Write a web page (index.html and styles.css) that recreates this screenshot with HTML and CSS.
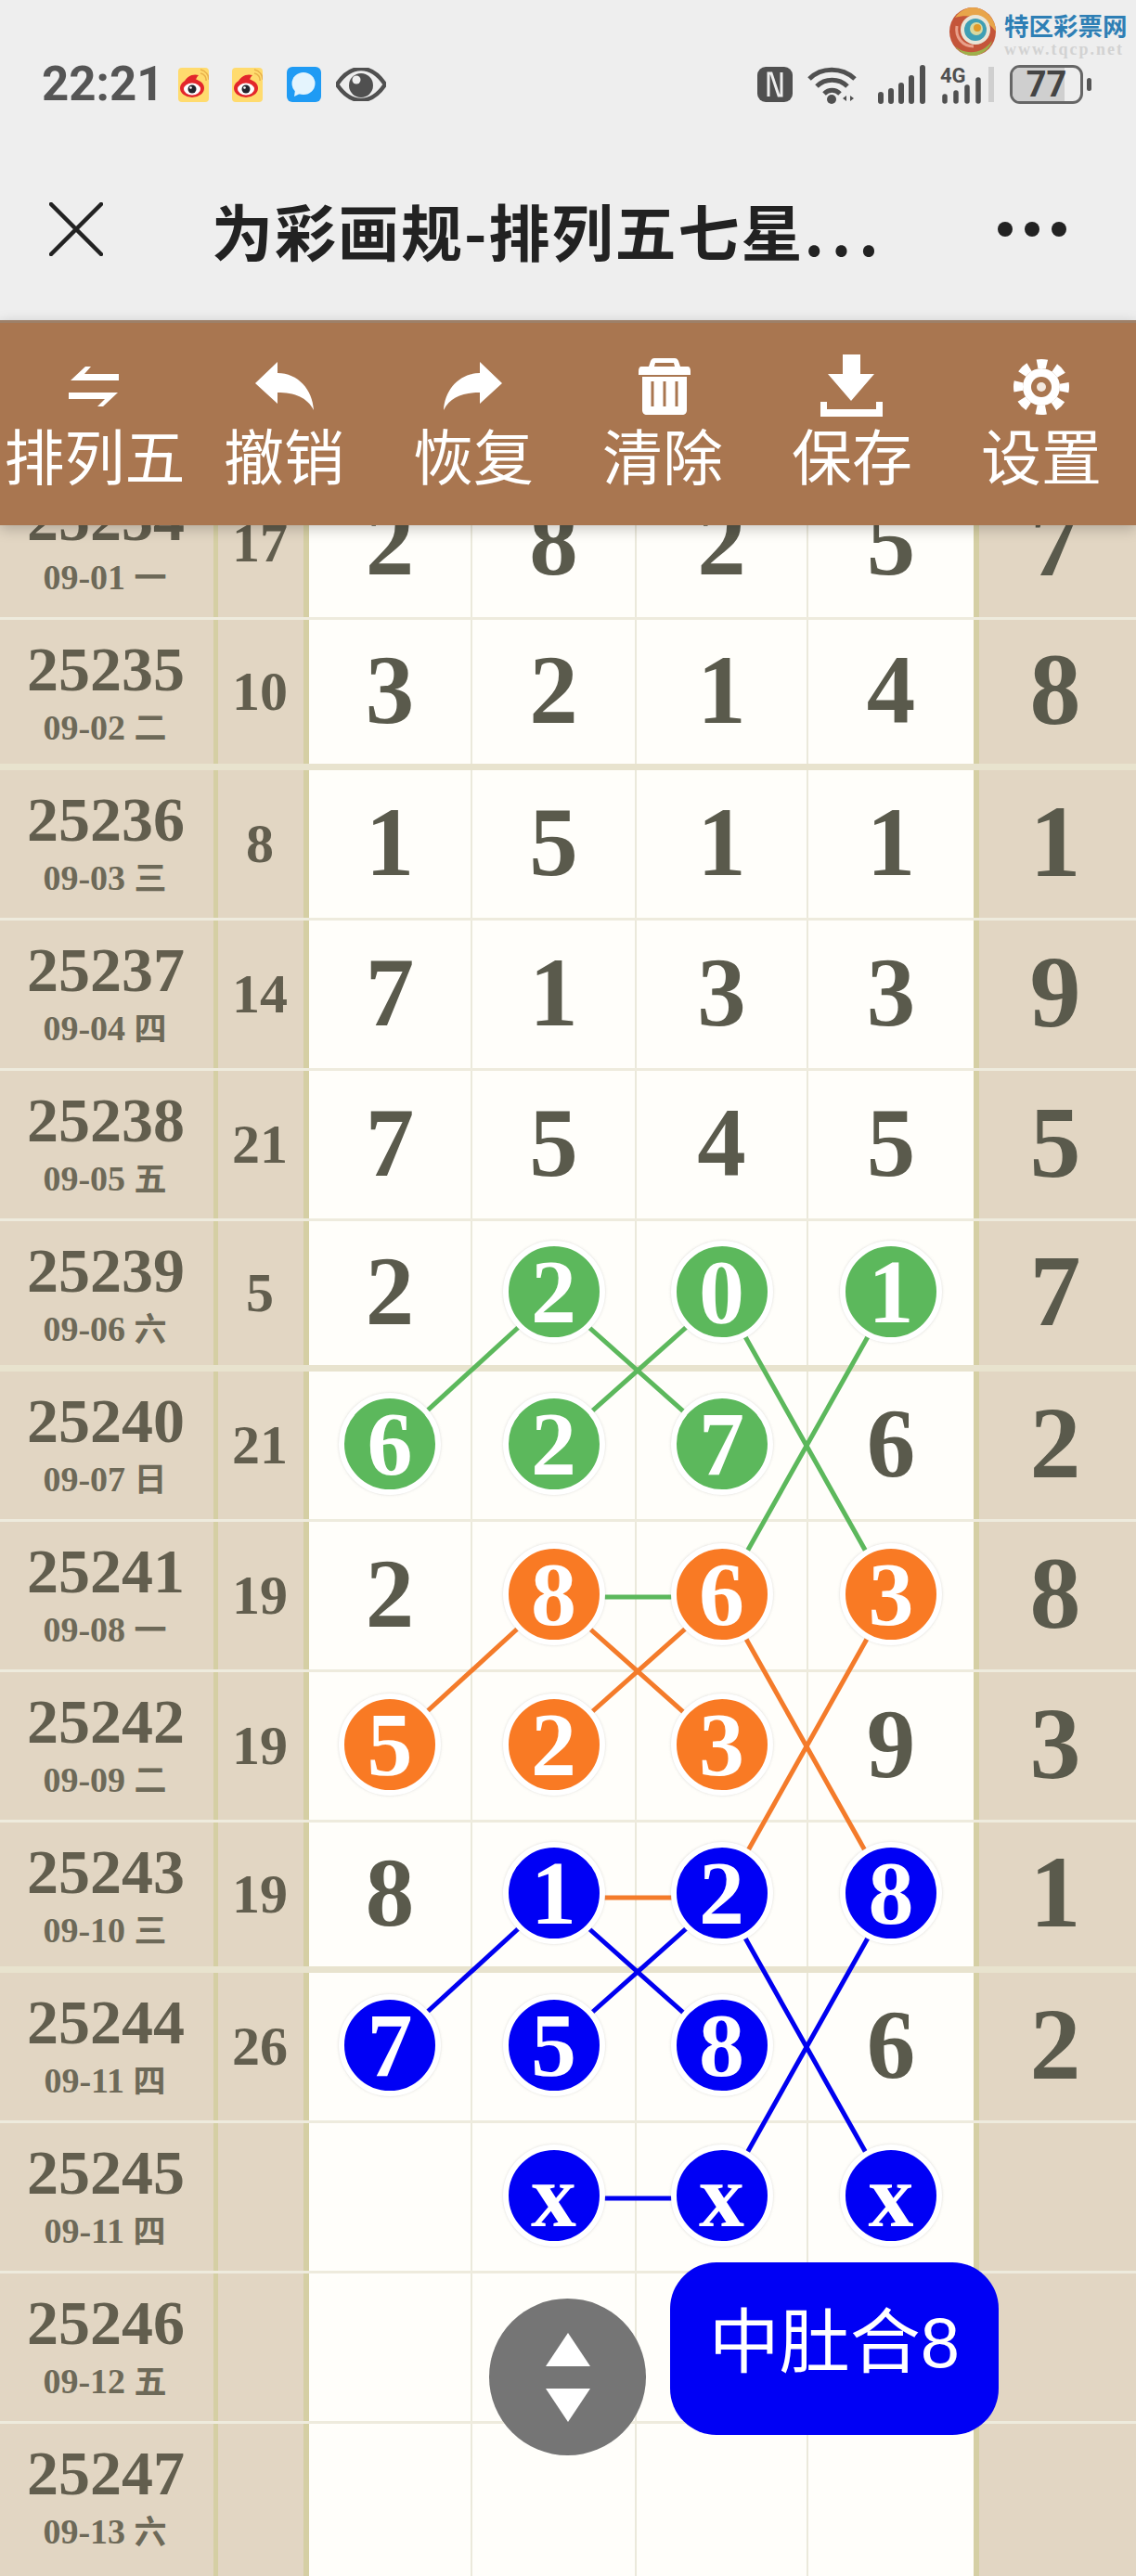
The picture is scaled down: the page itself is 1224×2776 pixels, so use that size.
FILE: index.html
```html
<!DOCTYPE html>
<html lang="zh-CN">
<head>
  <meta charset="UTF-8">
  <meta name="viewport" content="width=device-width, initial-scale=1.0">
  <title>为彩画规-排列五七星</title>
  <link rel="stylesheet" href="styles.css">
</head>
<body>
  <div class="phone">
    <div class="statusbar">
      <div class="status-left">
        <span class="clock">22:21</span>
        <svg class="note-weibo" viewBox="0 0 33 37">
          <rect width="33" height="37" rx="4" fill="#ffdb6e"/>
          <path d="M24 6a7 7 0 0 1 6 8M24 2a11 11 0 0 1 9 11" fill="none" stroke="#e8b04a" stroke-width="1.5"/>
          <ellipse cx="15" cy="22" rx="13" ry="10" fill="#e3262b"/>
          <path d="M6 16C9 9 16 6 22 8c-2 2-3 4-3 6z" fill="#e3262b"/>
          <ellipse cx="15" cy="23" rx="9" ry="6.5" fill="#fff"/>
          <circle cx="15" cy="23" r="4.5" fill="#23242c"/>
          <circle cx="13.5" cy="21.5" r="1.3" fill="#fff"/>
        </svg>
        <svg class="note-weibo" viewBox="0 0 33 37">
          <rect width="33" height="37" rx="4" fill="#ffdb6e"/>
          <path d="M24 6a7 7 0 0 1 6 8M24 2a11 11 0 0 1 9 11" fill="none" stroke="#e8b04a" stroke-width="1.5"/>
          <ellipse cx="15" cy="22" rx="13" ry="10" fill="#e3262b"/>
          <path d="M6 16C9 9 16 6 22 8c-2 2-3 4-3 6z" fill="#e3262b"/>
          <ellipse cx="15" cy="23" rx="9" ry="6.5" fill="#fff"/>
          <circle cx="15" cy="23" r="4.5" fill="#23242c"/>
          <circle cx="13.5" cy="21.5" r="1.3" fill="#fff"/>
        </svg>
        <svg class="note-msg" viewBox="0 0 37 38">
          <rect width="37" height="38" rx="6" fill="#1f9bf4"/>
          <ellipse cx="18" cy="18" rx="12.5" ry="12" fill="#e4f4fd"/>
          <path d="M9 25l-1 7 8-4z" fill="#e4f4fd"/>
        </svg>
        <svg class="note-eye" viewBox="0 0 54 36">
          <path d="M1 18C9 6 18 1 27 1s18 5 26 17c-8 12-17 17-26 17S9 30 1 18z" fill="none" stroke="#505050" stroke-width="4.5"/>
          <circle cx="27" cy="19" r="13" fill="#505050"/>
          <circle cx="22" cy="13" r="4.5" fill="#eee"/>
        </svg>
      </div>
      <div class="status-right">
        <svg class="sys-nfc" viewBox="0 0 38 38">
          <rect x="0" y="0" width="38" height="38" rx="9" fill="#505050"/>
          <path d="M12 32V7h3l8 24h3V6" fill="none" stroke="#eee" stroke-width="3"/>
        </svg>
        <svg class="sys-wifi" viewBox="0 0 53 42">
          <path d="M2 15C15 2 37 2 51 15M10 23c9-9 24-9 33 0M18 31c5-5 12-5 17 0" fill="none" stroke="#505050" stroke-width="5"/>
          <circle cx="26" cy="37" r="5" fill="#505050"/>
          <path d="M38 36l4-3v6zM46 33l4 3-4 3z" fill="#505050"/>
        </svg>
        <svg class="sys-signal" viewBox="0 0 51 42">
          <g stroke="#505050" stroke-width="6" stroke-linecap="round">
            <path d="M3 32v7M14 28v11M25 22v17M36 14v25M48 3v36"/>
          </g>
        </svg>
        <svg class="sys-signal4g" viewBox="0 0 60 42">
          <g stroke="#505050" stroke-width="5.5" stroke-linecap="round">
            <path d="M5 34v5M17 30v9M29 24v15M41 16v23"/>
          </g>
          <path d="M55 2v38" stroke="#cfcfcf" stroke-width="6"/>
          <text class="sys-4g-text" x="0" y="19">4G</text>
        </svg>
        <div class="battery">
          <div class="battery-body"><span class="battery-level"></span><span class="battery-num">77</span></div>
          <span class="battery-tip"></span>
        </div>
      </div>
    </div>

    <div class="logo">
      <svg class="logo-mark" viewBox="0 0 50 52">
        <ellipse cx="25" cy="26" rx="25" ry="26" fill="#c4553a"/>
        <path d="M25 0C38 0 50 12 50 26 40 12 22 6 6 11 11 4 18 0 25 0z" fill="#e8a54a"/>
        <path d="M6 42c12 10 30 8 40-6-2 9-12 16-21 16-8 0-14-4-19-10z" fill="#9eb04a"/>
        <path d="M8 20c-2 12 6 22 18 22" fill="none" stroke="#e9a08a" stroke-width="3"/>
        <circle cx="28" cy="24" r="16" fill="#e9e6d8"/>
        <circle cx="28" cy="24" r="12" fill="#3f9fb4"/>
        <circle cx="29" cy="23" r="7" fill="#d8d8a0"/>
        <circle cx="30" cy="22" r="4" fill="#e09a2a"/>
      </svg>
      <div class="logo-text">
        <div class="logo-name">特区彩票网</div>
        <div class="logo-url">www.tqcp.net</div>
      </div>
    </div>

    <div class="navbar">
      <svg class="nav-close" viewBox="0 0 58 58">
        <path d="M2 2l54 54M56 2L2 56" stroke="#222" stroke-width="4.5" stroke-linecap="round"/>
      </svg>
      <div class="nav-title">为彩画规-排列五七星<span class="nav-dots">...</span></div>
      <div class="nav-more"><span></span><span></span><span></span></div>
    </div>

    <div class="toolbar">
      <div class="tool">
        <svg viewBox="0 0 70 64"><path d="M9 26L25 11h6l-7 8h37v7zM7 39h53L44 54h-6l8-8H7z" fill="#fff"/></svg>
        <span>排列五</span>
      </div>
      <div class="tool">
        <svg viewBox="0 0 70 64"><path d="M4 29L28 6v12c22 0 38 18 39 40-7-14-21-19-39-19v12z" fill="#fff"/></svg>
        <span>撤销</span>
      </div>
      <div class="tool">
        <svg viewBox="0 0 70 64"><path d="M66 29L42 6v12C20 18 4 36 3 58c7-14 21-19 39-19v12z" fill="#fff"/></svg>
        <span>恢复</span>
      </div>
      <div class="tool">
        <svg viewBox="0 0 70 64">
          <path d="M20 11l2-6c1-2 2-3 4-3h22c2 0 3 1 4 3l2 6h8c2 0 3 2 3 5v4H9v-4c0-3 1-5 3-5zM26 11h22l-1-4H27z" fill="#fff" fill-rule="evenodd"/>
          <path d="M13 22h48v36c0 3-2 5-5 5H18c-3 0-5-2-5-5z" fill="#fff"/>
          <path d="M24 27v27M37 27v27M50 27v27" stroke="#a97650" stroke-width="3"/>
        </svg>
        <span>清除</span>
      </div>
      <div class="tool">
        <svg viewBox="0 0 70 64">
          <path d="M25-2h19v21h15L34 48 9 19h16zM1 49h7v8h53v-8h7v16H1z" fill="#fff"/>
        </svg>
        <span>保存</span>
      </div>
      <div class="tool">
        <svg viewBox="0 0 70 64">
          <circle cx="35" cy="33" r="20" fill="#fff"/>
          <circle cx="35" cy="33" r="25" fill="none" stroke="#fff" stroke-width="10" stroke-dasharray="10.6 9.03" stroke-dashoffset="5.3"/>
          <circle cx="35" cy="33" r="11" fill="#a97650"/>
          <circle cx="35" cy="33" r="5" fill="#f3e9df"/>
        </svg>
        <span>设置</span>
      </div>
    </div>

    <div class="board">
      <div class="rows">
        <svg class="links" viewBox="0 0 1224 2268">
          <g class="link-green">
            <line x1="596" y1="892" x2="419" y2="1054"/>
            <line x1="778" y1="892" x2="596" y2="1054"/>
            <line x1="596" y1="892" x2="778" y2="1054"/>
            <line x1="778" y1="892" x2="960" y2="1216"/>
            <line x1="960" y1="892" x2="778" y2="1216"/>
            <line x1="596" y1="1217" x2="778" y2="1217"/>
          </g>
          <g class="link-orange">
            <line x1="596" y1="1216" x2="419" y2="1378"/>
            <line x1="778" y1="1216" x2="596" y2="1378"/>
            <line x1="596" y1="1216" x2="778" y2="1378"/>
            <line x1="778" y1="1216" x2="960" y2="1540"/>
            <line x1="960" y1="1216" x2="778" y2="1540"/>
            <line x1="596" y1="1541" x2="778" y2="1541"/>
          </g>
          <g class="link-blue">
            <line x1="596" y1="1540" x2="419" y2="1702"/>
            <line x1="778" y1="1540" x2="596" y2="1702"/>
            <line x1="596" y1="1540" x2="778" y2="1702"/>
            <line x1="778" y1="1540" x2="960" y2="1864"/>
            <line x1="960" y1="1540" x2="778" y2="1864"/>
            <line x1="596" y1="1865" x2="778" y2="1865"/>
          </g>
        </svg>

        <div class="row">
          <div class="cell-issue"><div class="issue">25234</div><div class="date">09-01 <span class="week">一</span></div></div>
          <div class="cell-sum">17</div>
          <div class="num">2</div><div class="num">8</div><div class="num">2</div><div class="num">5</div>
          <div class="cell-last">7</div>
        </div>
        <div class="row row-end">
          <div class="cell-issue"><div class="issue">25235</div><div class="date">09-02 <span class="week">二</span></div></div>
          <div class="cell-sum">10</div>
          <div class="num">3</div><div class="num">2</div><div class="num">1</div><div class="num">4</div>
          <div class="cell-last">8</div>
        </div>
        <div class="row">
          <div class="cell-issue"><div class="issue">25236</div><div class="date">09-03 <span class="week">三</span></div></div>
          <div class="cell-sum">8</div>
          <div class="num">1</div><div class="num">5</div><div class="num">1</div><div class="num">1</div>
          <div class="cell-last">1</div>
        </div>
        <div class="row">
          <div class="cell-issue"><div class="issue">25237</div><div class="date">09-04 <span class="week">四</span></div></div>
          <div class="cell-sum">14</div>
          <div class="num">7</div><div class="num">1</div><div class="num">3</div><div class="num">3</div>
          <div class="cell-last">9</div>
        </div>
        <div class="row">
          <div class="cell-issue"><div class="issue">25238</div><div class="date">09-05 <span class="week">五</span></div></div>
          <div class="cell-sum">21</div>
          <div class="num">7</div><div class="num">5</div><div class="num">4</div><div class="num">5</div>
          <div class="cell-last">5</div>
        </div>
        <div class="row row-end">
          <div class="cell-issue"><div class="issue">25239</div><div class="date">09-06 <span class="week">六</span></div></div>
          <div class="cell-sum">5</div>
          <div class="num">2</div>
          <div class="num"><span class="ball ball-green">2</span></div>
          <div class="num"><span class="ball ball-green">0</span></div>
          <div class="num"><span class="ball ball-green">1</span></div>
          <div class="cell-last">7</div>
        </div>
        <div class="row">
          <div class="cell-issue"><div class="issue">25240</div><div class="date">09-07 <span class="week">日</span></div></div>
          <div class="cell-sum">21</div>
          <div class="num"><span class="ball ball-green">6</span></div>
          <div class="num"><span class="ball ball-green">2</span></div>
          <div class="num"><span class="ball ball-green">7</span></div>
          <div class="num">6</div>
          <div class="cell-last">2</div>
        </div>
        <div class="row">
          <div class="cell-issue"><div class="issue">25241</div><div class="date">09-08 <span class="week">一</span></div></div>
          <div class="cell-sum">19</div>
          <div class="num">2</div>
          <div class="num"><span class="ball ball-orange">8</span></div>
          <div class="num"><span class="ball ball-orange">6</span></div>
          <div class="num"><span class="ball ball-orange">3</span></div>
          <div class="cell-last">8</div>
        </div>
        <div class="row">
          <div class="cell-issue"><div class="issue">25242</div><div class="date">09-09 <span class="week">二</span></div></div>
          <div class="cell-sum">19</div>
          <div class="num"><span class="ball ball-orange">5</span></div>
          <div class="num"><span class="ball ball-orange">2</span></div>
          <div class="num"><span class="ball ball-orange">3</span></div>
          <div class="num">9</div>
          <div class="cell-last">3</div>
        </div>
        <div class="row row-end">
          <div class="cell-issue"><div class="issue">25243</div><div class="date">09-10 <span class="week">三</span></div></div>
          <div class="cell-sum">19</div>
          <div class="num">8</div>
          <div class="num"><span class="ball ball-blue">1</span></div>
          <div class="num"><span class="ball ball-blue">2</span></div>
          <div class="num"><span class="ball ball-blue">8</span></div>
          <div class="cell-last">1</div>
        </div>
        <div class="row">
          <div class="cell-issue"><div class="issue">25244</div><div class="date">09-11 <span class="week">四</span></div></div>
          <div class="cell-sum">26</div>
          <div class="num"><span class="ball ball-blue">7</span></div>
          <div class="num"><span class="ball ball-blue">5</span></div>
          <div class="num"><span class="ball ball-blue">8</span></div>
          <div class="num">6</div>
          <div class="cell-last">2</div>
        </div>
        <div class="row">
          <div class="cell-issue"><div class="issue">25245</div><div class="date">09-11 <span class="week">四</span></div></div>
          <div class="cell-sum"></div>
          <div class="num"></div>
          <div class="num"><span class="ball ball-blue">x</span></div>
          <div class="num"><span class="ball ball-blue">x</span></div>
          <div class="num"><span class="ball ball-blue">x</span></div>
          <div class="cell-last"></div>
        </div>
        <div class="row">
          <div class="cell-issue"><div class="issue">25246</div><div class="date">09-12 <span class="week">五</span></div></div>
          <div class="cell-sum"></div>
          <div class="num"></div><div class="num"></div><div class="num"></div><div class="num"></div>
          <div class="cell-last"></div>
        </div>
        <div class="row row-tail">
          <div class="cell-issue"><div class="issue">25247</div><div class="date">09-13 <span class="week">六</span></div></div>
          <div class="cell-sum"></div>
          <div class="num"></div><div class="num"></div><div class="num"></div><div class="num"></div>
          <div class="cell-last"></div>
        </div>
      </div>

      <div class="scroll-btn">
        <span class="tri-up"></span>
        <span class="tri-down"></span>
      </div>
      <div class="result-btn">中肚合8</div>
    </div>
  </div>
</body>
</html>
```

FILE: styles.css
```css
html, body {
  margin: 0;
  padding: 0;
}

body {
  background-color: #eee;
  font-family: "Liberation Serif", "Noto Sans CJK SC", serif;
}

.phone {
  position: relative;
  width: 1224px;
  height: 2776px;
  overflow: hidden;
}

/* status bar */
.statusbar {
  display: flex;
  justify-content: space-between;
  align-items: center;
  box-sizing: border-box;
  height: 154px;
  padding: 70px 48px 42px 45px;
  background-color: #eee;
}

.status-left,
.status-right {
  display: flex;
  align-items: center;
  height: 42px;
}

.clock {
  width: 123px;
  margin-right: 24px;
  font-family: Roboto, sans-serif;
  font-size: 51px;
  font-weight: 700;
  color: #555;
  line-height: 42px;
  white-space: nowrap;
}

.note-weibo {
  width: 33px;
  height: 37px;
  margin-right: 25px;
}

.note-msg {
  width: 37px;
  height: 38px;
  margin-left: 1px;
  margin-right: 16px;
}

.note-eye {
  width: 54px;
  height: 36px;
}

.sys-nfc {
  width: 38px;
  height: 38px;
  margin-right: 16px;
}

.sys-wifi {
  width: 53px;
  height: 42px;
  margin-right: 23px;
}

.sys-signal {
  width: 51px;
  height: 42px;
  margin-right: 16px;
}

.sys-signal4g {
  width: 60px;
  height: 42px;
  margin-right: 15px;
}

.sys-4g-text {
  font-family: Roboto, sans-serif;
  font-size: 22px;
  font-weight: 700;
  fill: #505050;
}

.battery {
  display: flex;
  align-items: center;
}

.battery-body {
  position: relative;
  display: flex;
  align-items: center;
  justify-content: center;
  box-sizing: border-box;
  width: 79px;
  height: 42px;
  border: 3px solid #666;
  border-radius: 11px;
  overflow: hidden;
}

.battery-level {
  position: absolute;
  top: 0;
  bottom: 0;
  left: 0;
  width: 77%;
  background-color: #cfcfcf;
}

.battery-num {
  position: relative;
  font-family: Roboto, sans-serif;
  font-size: 38px;
  font-weight: 700;
  color: #444;
}

.battery-tip {
  width: 5px;
  height: 14px;
  margin-left: 4px;
  border-radius: 3px;
  background-color: #555;
}

/* watermark in the corner */
.logo {
  position: absolute;
  top: 8px;
  left: 1023px;
  display: flex;
  gap: 9px;
}

.logo-mark {
  width: 50px;
  height: 52px;
}

.logo-name {
  font-family: "Noto Sans CJK SC", sans-serif;
  font-size: 26.5px;
  font-weight: 700;
  line-height: 38px;
  color: #2e7fb5;
  white-space: nowrap;
}

.logo-url {
  margin-top: -1px;
  font-size: 18px;
  font-weight: 700;
  line-height: 16px;
  letter-spacing: 2px;
  color: #d2d2d2;
  white-space: nowrap;
}

/* title bar */
.navbar {
  display: flex;
  align-items: center;
  box-sizing: border-box;
  height: 186px;
  padding-left: 53px;
  background-color: #eee;
}

.nav-close {
  width: 58px;
  height: 58px;
  margin-right: 117px;
}

.nav-title {
  width: 847px;
  font-family: "Noto Sans CJK SC", sans-serif;
  font-size: 66px;
  font-weight: 700;
  letter-spacing: 2px;
  color: #222;
  white-space: nowrap;
}

.nav-dots {
  letter-spacing: 8px;
}

.nav-more {
  display: flex;
  gap: 13px;
}

.nav-more span {
  width: 16px;
  height: 16px;
  border-radius: 50%;
  background-color: #222;
}

/* brown toolbar */
.toolbar {
  position: relative;
  z-index: 5;
  display: flex;
  box-sizing: border-box;
  height: 221px;
  margin-top: 5px;
  padding-top: 36px;
  border-top: 3px solid #9d8069;
  background-color: #a97650;
  box-shadow: 0 4px 14px rgba(0, 0, 0, 0.22);
}

.tool {
  display: flex;
  flex-direction: column;
  align-items: center;
  width: 204px;
}

.tool svg {
  width: 70px;
  height: 64px;
  overflow: visible;
}

.tool span {
  margin-top: 6px;
  font-family: "Noto Sans CJK SC", sans-serif;
  font-size: 65px;
  line-height: 70px;
  color: #fff;
  white-space: nowrap;
}

/* the chart */
.board {
  position: relative;
  height: 2211px;
  overflow: hidden;
}

.rows {
  position: relative;
  margin-top: -60px;
}

.links {
  position: absolute;
  top: -2px;
  left: 0;
  width: 1224px;
  height: 2268px;
}

.links line {
  stroke-width: 5;
}

.link-green line {
  stroke: #5cb85c;
}

.link-orange line {
  stroke: #f47b2a;
}

.link-blue line {
  stroke: #0000f0;
}

.row {
  display: grid;
  grid-template-columns: 235px 98px 176px 177px 185px 178px 175px;
  box-sizing: border-box;
  height: 162px;
  border-bottom: 3px solid #eeebdd;
}

.row-end {
  border-bottom: 7px solid #e8e3ce;
}

.row-tail {
  height: 180px;
  border-bottom: 0;
}

.cell-issue,
.cell-sum,
.cell-last {
  background-color: #e2d6c3;
  color: #625e4e;
}

.cell-issue {
  box-sizing: border-box;
  padding-top: 23px;
  padding-right: 2px;
  border-right: 5px solid #d5cfa4;
  text-align: center;
}

.issue {
  font-size: 68px;
  font-weight: 700;
  line-height: 60px;
}

.date {
  margin-top: 5px;
  padding-right: 2px;
  font-size: 38px;
  font-weight: 700;
  line-height: 52px;
  color: #6d6958;
}

.week {
  font-family: "Noto Sans CJK SC", sans-serif;
  font-size: 35px;
  font-weight: 700;
}

.cell-sum {
  display: flex;
  align-items: center;
  justify-content: center;
  box-sizing: border-box;
  padding-right: 2px;
  border-right: 6px solid #d5cfa4;
  font-size: 60px;
  font-weight: 700;
}

.num {
  display: flex;
  align-items: center;
  justify-content: center;
  box-sizing: border-box;
  padding-bottom: 4px;
  border-right: 2px solid #ebe9db;
  background-color: #fffefa;
  font-size: 105px;
  font-weight: 700;
  color: #5a5a4c;
}

.num:nth-child(6) {
  border-right: 0;
}

.cell-last {
  display: flex;
  align-items: center;
  justify-content: center;
  box-sizing: border-box;
  padding-right: 5px;
  padding-bottom: 4px;
  border-left: 6px solid #d5cfa4;
  font-size: 110px;
  font-weight: 700;
  color: #5a5a4c;
}

.ball {
  position: relative;
  z-index: 1;
  display: flex;
  align-items: center;
  justify-content: center;
  box-sizing: border-box;
  flex: none;
  width: 110px;
  height: 110px;
  border: 6px solid #fff;
  border-radius: 50%;
  box-shadow: 0 0 3px rgba(150, 150, 150, 0.35);
  font-size: 98px;
  color: #fff;
}

.ball-green {
  background-color: #5cb85c;
}

.ball-orange {
  background-color: #f97a24;
}

.ball-blue {
  background-color: #0000f5;
}

/* floating buttons */
.scroll-btn {
  position: absolute;
  top: 1911px;
  left: 527px;
  z-index: 3;
  display: flex;
  flex-direction: column;
  align-items: center;
  justify-content: center;
  gap: 24px;
  width: 169px;
  height: 169px;
  border-radius: 50%;
  background-color: #757575;
}

.tri-up,
.tri-down {
  width: 0;
  height: 0;
  border-left: 24px solid transparent;
  border-right: 24px solid transparent;
}

.tri-up {
  border-bottom: 36px solid #fff;
}

.tri-down {
  border-top: 36px solid #fff;
}

.result-btn {
  position: absolute;
  top: 1872px;
  left: 722px;
  z-index: 3;
  box-sizing: border-box;
  width: 354px;
  height: 186px;
  padding-top: 44px;
  border-radius: 50px;
  background-color: #0000f5;
  font-family: "Liberation Sans", "Noto Sans CJK SC", sans-serif;
  font-size: 76px;
  line-height: 86px;
  color: #fff;
  text-align: center;
  white-space: nowrap;
}
```
